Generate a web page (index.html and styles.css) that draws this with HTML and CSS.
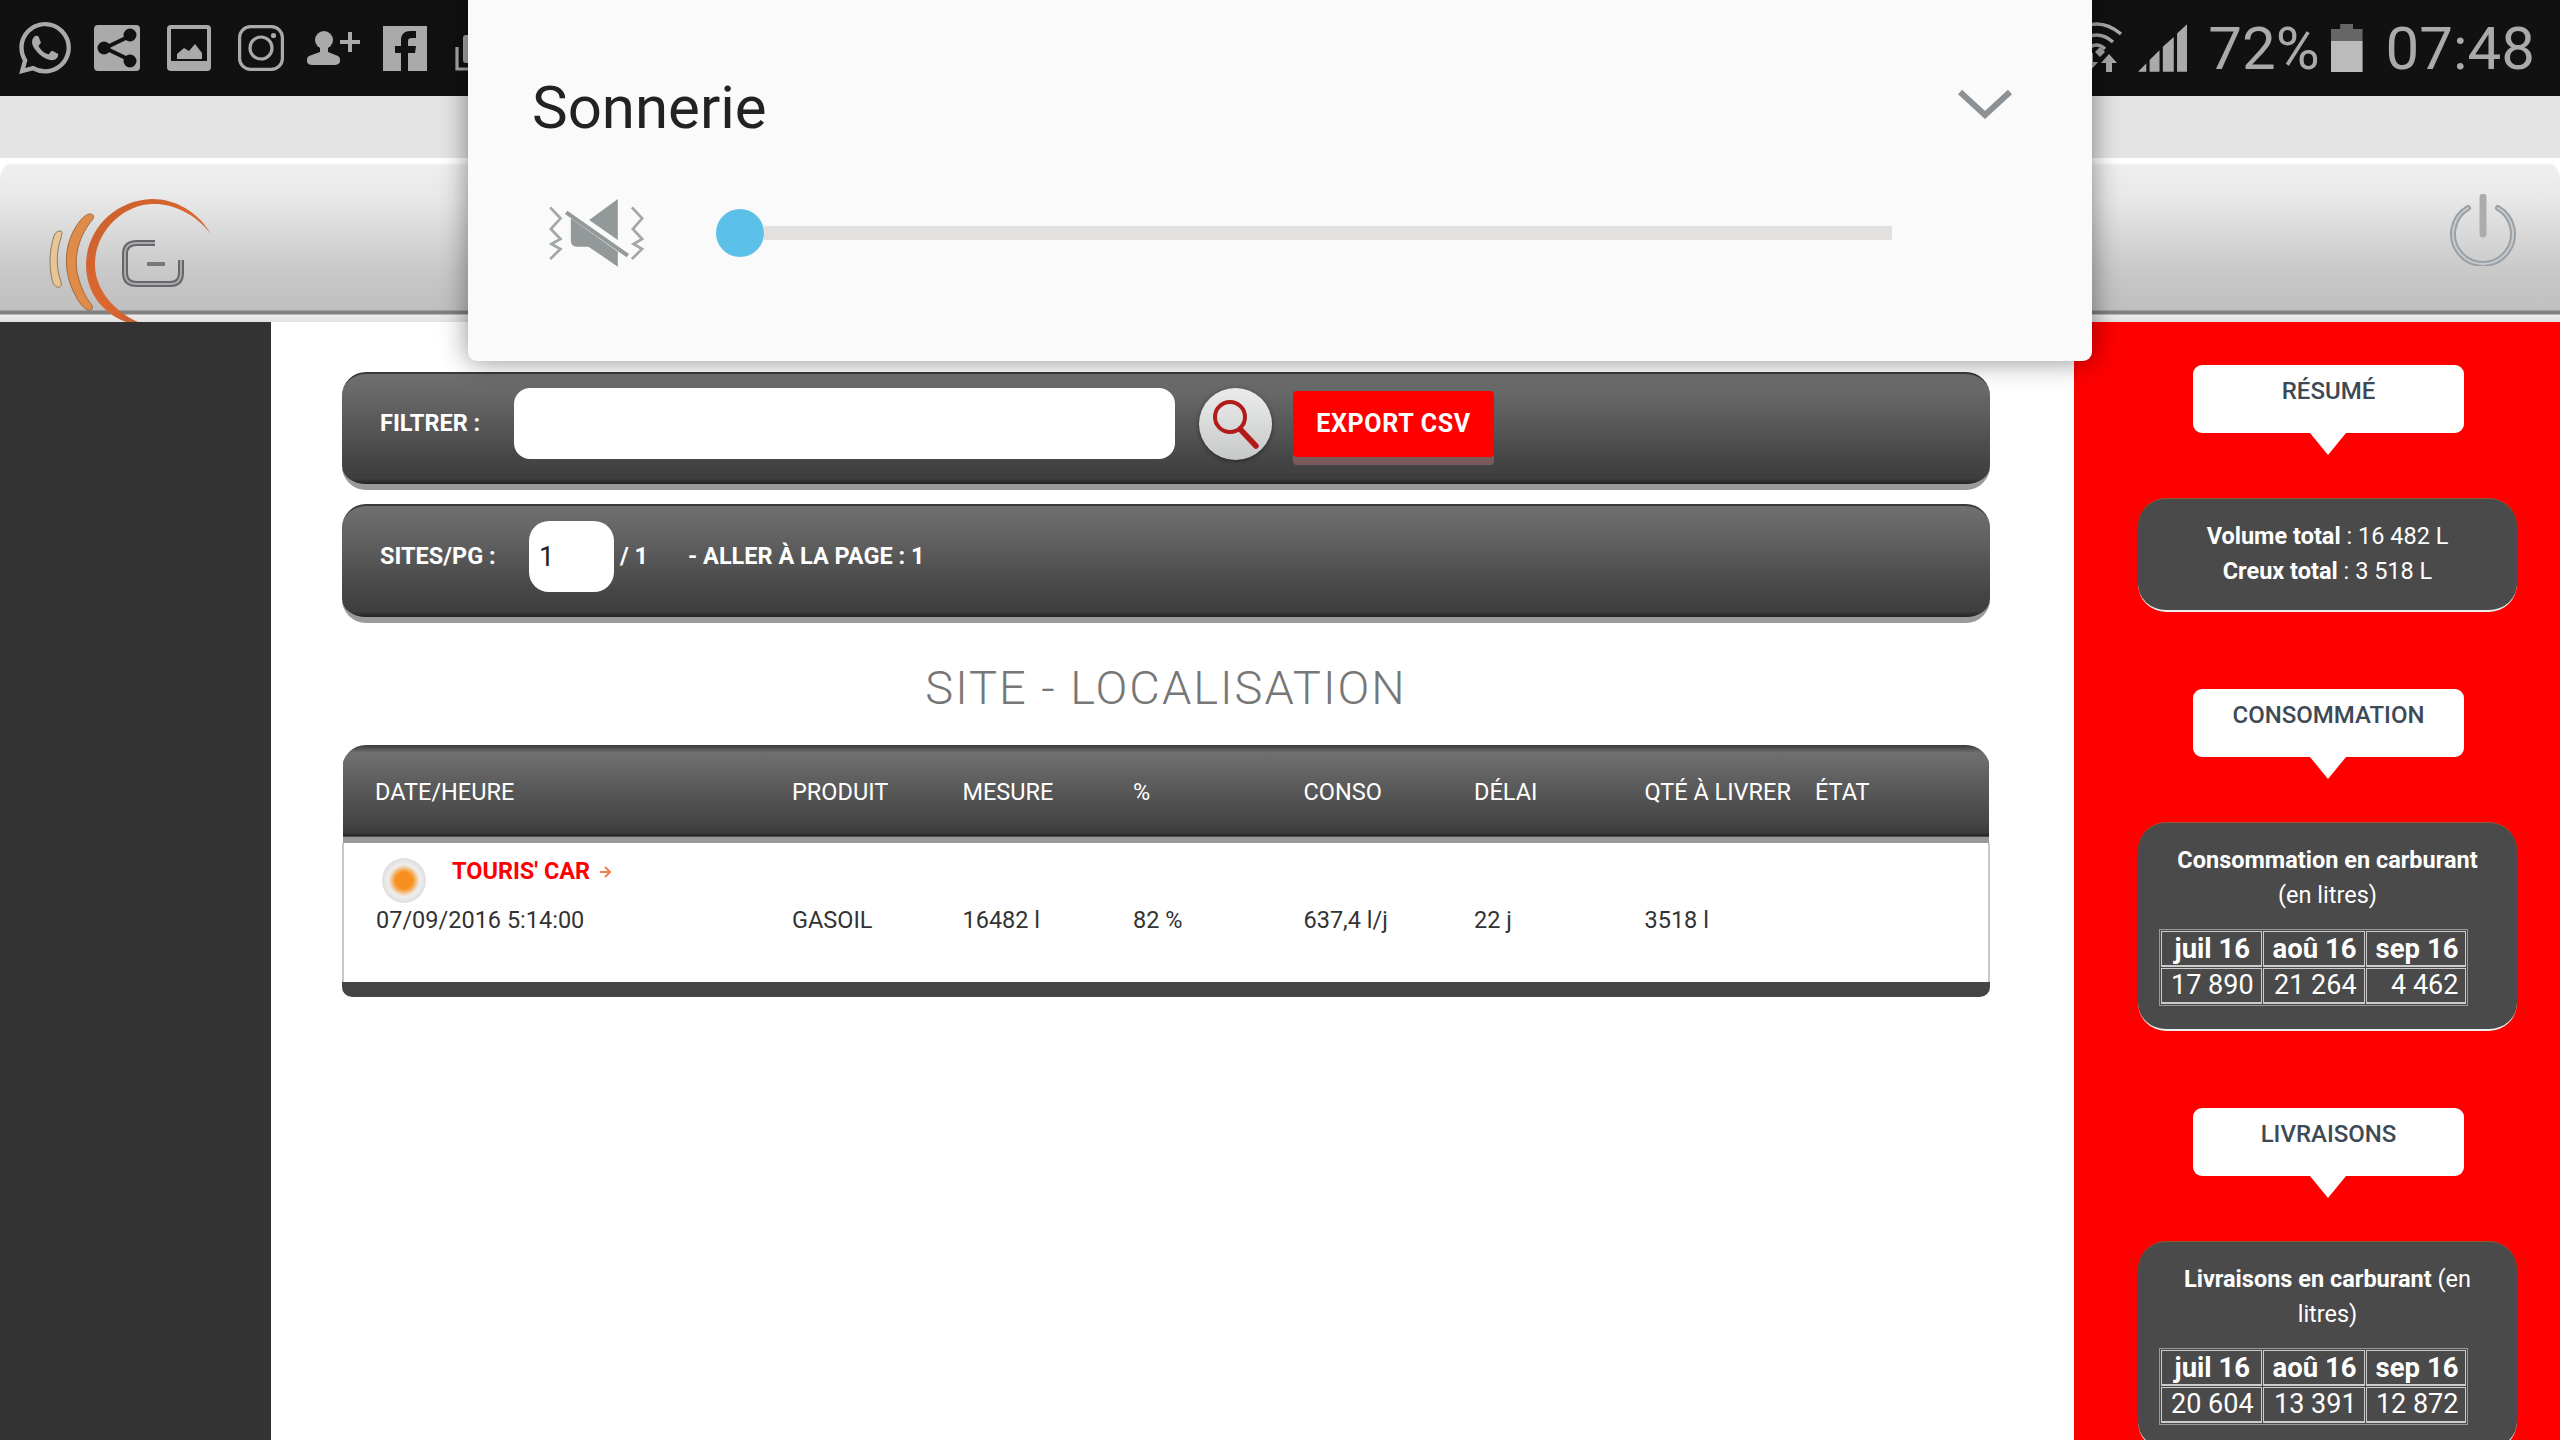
FILE: index.html
```html
<!DOCTYPE html>
<html lang="fr">
<head>
    <meta charset="UTF-8">
    <meta name="viewport" content="width=device-width, initial-scale=1.0">
    <title>Sites</title>
    <link rel="stylesheet" href="styles.css">
</head>
<body>

    <!-- Android status bar -->
    <div class="statusbar">
        <div class="notif-icons">
            <span class="notif"><svg width="52" height="52" viewBox="0 0 24 24"><path class="ico" d="M17.472 14.382c-.297-.149-1.758-.867-2.03-.967-.273-.099-.471-.148-.67.15-.197.297-.767.966-.94 1.164-.173.199-.347.223-.644.075-.297-.15-1.255-.463-2.39-1.475-.883-.788-1.48-1.761-1.653-2.059-.173-.297-.018-.458.13-.606.134-.133.298-.347.446-.52.149-.174.198-.298.298-.497.099-.198.05-.371-.025-.52-.075-.149-.669-1.612-.916-2.207-.242-.579-.487-.5-.669-.51-.173-.008-.371-.01-.57-.01-.198 0-.52.074-.792.372-.272.297-1.04 1.016-1.04 2.479 0 1.462 1.065 2.875 1.213 3.074.149.198 2.096 3.2 5.077 4.487.709.306 1.262.489 1.694.625.712.227 1.36.195 1.871.118.571-.085 1.758-.719 2.006-1.413.248-.694.248-1.289.173-1.413-.074-.124-.272-.198-.57-.347m-5.421 7.403h-.004a9.87 9.87 0 01-5.031-1.378l-.361-.214-3.741.982.998-3.648-.235-.374a9.86 9.86 0 01-1.51-5.26c.001-5.45 4.436-9.884 9.888-9.884 2.64 0 5.122 1.03 6.988 2.898a9.825 9.825 0 012.893 6.994c-.003 5.45-4.437 9.884-9.885 9.884m8.413-18.297A11.815 11.815 0 0012.05 0C5.495 0 .16 5.335.157 11.892c0 2.096.547 4.142 1.588 5.945L.057 24l6.305-1.654a11.882 11.882 0 005.683 1.448h.005c6.554 0 11.89-5.335 11.893-11.893a11.821 11.821 0 00-3.48-8.413z"/></svg></span>
            <span class="notif"><svg width="46" height="46" viewBox="0 0 46 46"><rect class="ico" width="46" height="46" rx="4"/><path d="M36 11 L11 23 L36 35" fill="none" stroke="#111" stroke-width="4"/><circle cx="36" cy="10" r="6.5" fill="#111"/><circle cx="10" cy="23" r="6.5" fill="#111"/><circle cx="36" cy="36" r="6.5" fill="#111"/></svg></span>
            <span class="notif"><svg width="44" height="46" viewBox="0 0 44 46"><rect class="ico" width="44" height="46" rx="4"/><rect x="4" y="4" width="36" height="32" fill="#111"/><path class="ico" d="M10 34 L10 29 L17 23 L22 26 L28 19 L35 28 L35 34 Z"/></svg></span>
            <span class="notif"><svg width="46" height="46" viewBox="0 0 46 46" fill="none" stroke="#aaa" stroke-width="3.2"><rect x="1.6" y="1.6" width="42.8" height="42.8" rx="11"/><circle cx="23" cy="23" r="11"/><circle class="ico" cx="35.5" cy="10.5" r="2.6" stroke="none"/></svg></span>
            <span class="notif"><svg width="54" height="34" viewBox="0 0 54 34"><circle class="ico" cx="18" cy="9" r="9"/><path class="ico" d="M14 16h8v5l10 4c2 1 2 3 2 5 0 3-3 4-6 4H7c-3 0-6-1-6-4 0-2 0-4 2-5l11-4z"/><path class="ico" d="M42 1h4v8h8v4h-8v8h-4v-8h-8V9h8z"/></svg></span>
            <span class="notif"><svg width="44" height="45" viewBox="0 0 44 45"><rect class="ico" width="44" height="45"/><path fill="#111" d="M18 45V27h-6v-7h6v-6c0-6 4-9 9-9h6v7h-4c-3 0-4 1-4 3v5h8l-1 7h-7v18z"/></svg></span>
            <span class="notif"><svg width="44" height="46" viewBox="0 0 44 46"><path fill="none" stroke="#aaa" stroke-width="3.2" d="M2 22V44H32"/><rect class="ico" x="8" y="10" width="32" height="28" rx="3"/></svg></span>
        </div>
        <div class="sys-icons">
            <svg class="wifi" width="48" height="50" viewBox="0 0 48 50" fill="none" stroke="#aaa" stroke-width="3.4">
                <path d="M-4 12 Q22 -8 46 12"/><path d="M4 20 Q22 6 38 20"/><path d="M12 27 Q22 19 30 27"/>
                <path class="ico" stroke="none" d="M25 25l5 5-5 5-5-5z"/>
                <path class="ico" stroke="none" d="M34 32l8 9h-5v9h-6v-9h-5z"/>
                <path class="ico" stroke="none" d="M15 49l-8-9h5v-9h6v9h5z"/>
            </svg>
            <svg class="signal" width="49" height="48" viewBox="237 72 148 143"><path class="ico" d="M237 215L262 190V215ZM272 215V180L302 150V215ZM312 215V140L345 110V215ZM355 215V100L385 72V215Z"/></svg>
            <span class="pct">72%</span>
            <span class="battery"></span>
            <span class="clock">07:48</span>
        </div>
    </div>

    <div class="topgap"></div>

    <!-- App header -->
    <header class="appbar">
        <svg class="logo" width="172" height="126" viewBox="45 198 172 126" fill="none">
            <defs>
                <linearGradient id="arc-big" x1="0" y1="0" x2="1" y2="1">
                    <stop offset="0" stop-color="#c9622c"/>
                    <stop offset="0.5" stop-color="#dc6630"/>
                    <stop offset="1" stop-color="#a85a3c"/>
                </linearGradient>
            </defs>
            <path fill="#e8c596" stroke="#8f7a5c" stroke-width="1" d="M60 231C63 231 62 234 61 238C56 252 56 268 61 282C62 286 60 288 57 287C53 286 52 280 51 274C49 262 50 248 54 236C55 233 57 231 60 231Z"/>
            <path fill="#e08c48" stroke="#a06a40" stroke-width="1" d="M90 214C95 214 94 218 92 220C76 240 74 262 78 276C81 288 86 298 91 304C94 308 92 311 88 310C82 308 76 298 71 286C63 264 65 240 80 221C84 216 87 214 90 214Z"/>
            <path fill="url(#arc-big)" d="M211 234C194 212 170 203 152 204C122 205 96 232 95 262C94 288 112 310 138 322H126C100 312 86 290 86 264C87 228 116 200 152 199C176 199 198 212 211 234Z"/>
            <path d="M155 243H137Q125 243 125 254V273Q125 284 137 284H170Q181 284 181 273V260" stroke="#66676a" stroke-width="6"/>
            <path d="M155 243H137Q125 243 125 254V273Q125 284 137 284H170Q181 284 181 273V260" stroke="#a8a9ab" stroke-width="2"/>
            <path d="M147 264H165" stroke="#77787b" stroke-width="4"/>
        </svg>
        <svg class="power" width="68" height="72" viewBox="0 0 68 72" fill="none" stroke-linecap="round">
            <path d="M19 14 A30 30 0 1 0 49 14" stroke="#9aa0a5" stroke-width="6"/>
            <path d="M19 14 A30 30 0 1 0 49 14" stroke="#c6cbce" stroke-width="2"/>
            <path d="M34 3V40" stroke="#a9adb0" stroke-width="7"/>
        </svg>
    </header>

    <div class="layout">
        <aside class="sidebar"></aside>

        <main class="content">
            <div class="bar">
                <span class="bar-label filter-label">FILTRER :</span>
                <input class="filter-input" type="text">
                <span class="search-btn">
                    <svg width="50" height="52" viewBox="0 0 50 52" fill="none" stroke="#b31b1b">
                        <circle cx="19" cy="19" r="15" stroke-width="4"/>
                        <path d="M29 31 L45 48" stroke-width="5.5" stroke-linecap="round"/>
                    </svg>
                </span>
                <span class="export-btn">EXPORT CSV</span>
            </div>

            <div class="bar bar-pages">
                <span class="bar-label sites-label">SITES/PG :</span>
                <input class="page-input" type="text" value="1">
                <span class="bar-label page-total">/ 1</span>
                <span class="bar-label page-goto">- ALLER À LA PAGE : 1</span>
            </div>

            <h2 class="title">SITE - LOCALISATION</h2>

            <div class="sites">
                <table class="sites-table">
                    <colgroup>
                        <col class="col-first">
                        <col><col><col><col><col><col>
                        <col class="col-last">
                    </colgroup>
                    <thead>
                        <tr>
                            <th>DATE/HEURE</th><th>PRODUIT</th><th>MESURE</th><th>%</th>
                            <th>CONSO</th><th>DÉLAI</th><th>QTÉ À LIVRER</th><th>ÉTAT</th>
                        </tr>
                    </thead>
                    <tbody>
                        <tr>
                            <td class="name-cell" colspan="8">
                                <div class="site-name">
                                    <span class="state-dot"></span>
                                    <span class="name-text">TOURIS' CAR</span>
                                    <svg width="12" height="14" viewBox="0 0 12 14" fill="none" stroke="#f08050" stroke-width="2"><path d="M1 7H10M6 2L11 7L6 12"/></svg>
                                </div>
                            </td>
                        </tr>
                        <tr class="data-row">
                            <td>07/09/2016 5:14:00</td><td>GASOIL</td><td>16482 l</td><td>82 %</td>
                            <td>637,4 l/j</td><td>22 j</td><td>3518 l</td><td></td>
                        </tr>
                    </tbody>
                </table>
            </div>
        </main>

        <aside class="side">
            <div class="bubble">RÉSUMÉ</div>
            <div class="card">
                <p><b>Volume total</b> : 16 482 L</p>
                <p><b>Creux total</b> : 3 518 L</p>
            </div>

            <div class="bubble">CONSOMMATION</div>
            <div class="card">
                <p><b>Consommation en carburant</b> (en litres)</p>
                <table class="months">
                    <tr><th>juil 16</th><th>aoû 16</th><th>sep 16</th></tr>
                    <tr><td>17 890</td><td>21 264</td><td>4 462</td></tr>
                </table>
            </div>

            <div class="bubble">LIVRAISONS</div>
            <div class="card">
                <p><b>Livraisons en carburant</b> (en litres)</p>
                <table class="months">
                    <tr><th>juil 16</th><th>aoû 16</th><th>sep 16</th></tr>
                    <tr><td>20 604</td><td>13 391</td><td>12 872</td></tr>
                </table>
            </div>
        </aside>
    </div>

    <!-- Volume dialog on top of the page -->
    <div class="volume-dialog">
        <div class="dialog-head">
            <span class="dialog-title">Sonnerie</span>
            <svg width="54" height="30" viewBox="0 0 54 30" fill="none" stroke="#8b9194" stroke-width="6"><path d="M2 3L27 26L52 3"/></svg>
        </div>
        <div class="dialog-row">
            <svg class="mute-icon" width="95" height="68" viewBox="207 447 284 204">
                <path fill="#939899" d="M327 510L413 447V570Z"/>
                <path fill="#939899" d="M272 505L413 605V650L325 590H290Q272 590 272 570Z"/>
                <path stroke="#939899" stroke-width="12" d="M258 487L443 617"/>
                <path fill="none" stroke="#a2a7a8" stroke-width="8" d="M210 472L241 505L212 537L241 567L214 582L241 597L210 627"/>
                <path fill="none" stroke="#a2a7a8" stroke-width="8" d="M455 472L486 505L458 537L486 567L460 582L486 597L455 627"/>
            </svg>
            <span class="thumb"></span>
            <span class="track"></span>
        </div>
    </div>

</body>
</html>
```

FILE: styles.css
```css
* {
    box-sizing: border-box;
}

html, body {
    margin: 0;
    height: 1440px;
    overflow: hidden;
}

body {
    position: relative;
    font-family: Roboto, "Liberation Sans", sans-serif;
    background: #fff;
}

.ico {
    fill: #aaa;
}

/* Status bar */
.statusbar {
    height: 96px;
    background: #111;
    display: flex;
    justify-content: space-between;
    padding: 0 25px 0 9px;
}

.notif-icons {
    display: flex;
}

.notif {
    width: 72px;
    height: 96px;
    display: flex;
    align-items: center;
    justify-content: center;
}

.sys-icons {
    display: flex;
    align-items: center;
    color: #aaa;
    font-size: 60px;
}

.wifi {
    margin-top: -2px;
    overflow: visible;
}

.signal {
    margin-left: 15px;
}

.pct {
    margin-left: 21px;
}

.battery {
    width: 32px;
    height: 48px;
    margin-left: 11px;
    background: linear-gradient(#666 0, #666 17px, #bbb 17px);
    clip-path: polygon(0 5px, 30% 5px, 30% 0, 70% 0, 70% 5px, 100% 5px, 100% 100%, 0 100%);
}

.clock {
    margin-left: 23px;
}

.topgap {
    height: 62px;
    background: #e4e4e4;
}

/* App header */
.appbar {
    height: 164px;
    background: #e4e4e4 linear-gradient(#fff 0, #fff 5px, #efefef 7px, #e8e8e8 40px, #c8c8c8 115px, #bfbfbf 152px, #808080 153px, #808080 156px, #ececec 157px, #e2e2e2 164px);
    border-radius: 22px 22px 0 0;
    display: flex;
    justify-content: space-between;
    padding: 0 43px 0 45px;
}

.logo {
    margin-top: 40px;
}

.power {
    margin-top: 36px;
}

/* Main layout */
.layout {
    display: flex;
    height: 1118px;
}

.sidebar {
    width: 271px;
    background: #333;
}

.content {
    width: 1803px;
    padding: 50px 84px 0 71px;
}

.bar {
    height: 118px;
    margin-bottom: 14px;
    display: flex;
    align-items: flex-start;
    padding-top: 14px;
    border-top: 2px solid #3a3a3a;
    border-bottom: 6px solid #9a9a9a;
    border-radius: 24px;
    background: linear-gradient(#707070 0, #5e5e5e 35%, #454545 78%, #3e3e3e 95%, #222 100%);
}

.bar-pages {
    height: 119px;
    padding-top: 15px;
}

.bar-label {
    color: #fff;
    font-size: 23.5px;
    font-weight: 700;
    line-height: 71px;
}

.filter-label {
    margin-left: 38px;
    width: 134px;
}

.sites-label {
    margin-left: 38px;
    width: 149px;
}

.filter-input {
    width: 661px;
    height: 71px;
    border: 0;
    border-radius: 16px;
    background: #fff;
}

.search-btn {
    width: 73px;
    height: 72px;
    margin-left: 24px;
    border-radius: 50%;
    background: linear-gradient(#ececec, #c6c9c9);
    box-shadow: 0 1px 4px rgba(0, 0, 0, 0.5);
    display: flex;
    align-items: center;
    justify-content: center;
}

.export-btn {
    margin: 3px 0 0 21px;
    width: 201px;
    height: 66px;
    border-radius: 4px;
    background: #f00;
    box-shadow: 0 8px 0 #7a5a5a;
    color: #fff;
    font-size: 25px;
    font-weight: 700;
    line-height: 66px;
    text-align: center;
    letter-spacing: 0.7px;
}

.page-input {
    width: 85px;
    height: 71px;
    border: 0;
    border-radius: 20px;
    padding: 0 0 0 10px;
    background: #fff;
    color: #222;
    font-family: Roboto, sans-serif;
    font-size: 27px;
}

.page-total {
    margin-left: 6px;
    width: 68px;
}

.title {
    margin: 0;
    height: 108px;
    color: #777;
    font-size: 47px;
    font-weight: 300;
    letter-spacing: 2px;
    line-height: 102px;
    text-align: center;
}

/* Sites table */
.sites {
    height: 252px;
    border-radius: 24px 24px 10px 10px;
    overflow: hidden;
    background: #fff;
    border-bottom: 15px solid #444;
}

.sites-table {
    width: 100%;
    table-layout: fixed;
    border-collapse: collapse;
    font-size: 23.5px;
}

.sites-table col {
    width: 170.5px;
}

.sites-table .col-first {
    width: 449px;
}

.sites-table .col-last {
    width: auto;
}

.sites-table th {
    height: 98px;
    padding: 0 0 5px;
    text-align: left;
    color: #fff;
    font-weight: 400;
    background: linear-gradient(#3a3a3a 0, #707070 8%, #5c5c5c 40%, #444 80%, #3a3a3a 90%, #222 93%, #999 94%, #999 100%);
}

.sites-table th:first-child,
.data-row td:first-child {
    padding-left: 32px;
}

.name-cell {
    padding: 15px 0 0 38px;
    border-left: 2px solid #c4cacc;
    border-right: 2px solid #c4cacc;
}

.site-name {
    display: flex;
    align-items: flex-start;
}

.state-dot {
    width: 44px;
    height: 45px;
    border-radius: 50%;
    background: radial-gradient(circle, #f7901e 0, #f7901e 27%, #eee 50%, #ddd 72%, #888 78%, #fff 100%);
}

.name-text {
    margin: 1px 0 0 26px;
    color: #f00;
    font-weight: 700;
    line-height: 24px;
}

.site-name svg {
    margin: 7px 0 0 9px;
}

.data-row td {
    height: 79px;
    padding: 0 0 45px;
    line-height: 34px;
    color: #333;
}

.data-row td:first-child {
    border-left: 2px solid #c4cacc;
}

.data-row td:last-child {
    border-right: 2px solid #c4cacc;
}

/* Red column on the right */
.side {
    width: 486px;
    background: #f00;
    padding: 43px 43px 0 64px;
}

.bubble {
    position: relative;
    width: 271px;
    height: 68px;
    margin-left: 55px;
    padding-top: 9px;
    border-radius: 9px;
    background: #fff;
    color: #3d4a56;
    font-size: 24px;
    font-weight: 500;
    line-height: 34px;
    text-align: center;
}

.bubble::after {
    content: "";
    position: absolute;
    left: 117px;
    top: 68px;
    border-left: 18px solid transparent;
    border-right: 18px solid transparent;
    border-top: 22px solid #fff;
}

.card {
    margin: 65px 0 77px;
    padding: 20px 21px 22px;
    border-top: 1px solid #8e5a32;
    border-bottom: 2px solid #eee;
    border-radius: 28px;
    background: #4a4a4a;
    color: #fff;
    font-size: 23.5px;
    line-height: 34.5px;
    text-align: center;
}

.card p {
    margin: 0;
}

.card b {
    font-weight: 700;
}

.months {
    margin: 17px 0 1px;
    border: 1px solid #999;
    border-spacing: 1px;
    font-size: 27px;
    line-height: 33px;
}

.months th,
.months td {
    padding: 0 7px 0 9px;
    border: 2px solid #ccc;
    border-width: 1px 1px 2px 1px;
}

.months th {
    font-size: 27.5px;
}

.months td {
    text-align: right;
}

/* Volume dialog */
.volume-dialog {
    position: absolute;
    left: 468px;
    top: 0;
    width: 1624px;
    height: 361px;
    border-radius: 0 0 9px 9px;
    background: #fafafa;
    box-shadow: 0 0 28px rgba(0, 0, 0, 0.45);
    padding: 0 72px 0 64px;
}

.dialog-head {
    height: 199px;
    display: flex;
    justify-content: space-between;
    padding-top: 73px;
}

.dialog-title {
    color: #222;
    font-size: 60px;
    line-height: 70px;
}

.dialog-head svg {
    margin: 16px 8px 0 0;
}

.dialog-row {
    display: flex;
    align-items: center;
    height: 68px;
    padding-left: 17px;
}

.thumb {
    width: 48px;
    height: 48px;
    margin-left: 72px;
    border-radius: 50%;
    background: #5bc1e9;
}

.track {
    width: 1128px;
    height: 14px;
    background: #e2e1df;
}
```
